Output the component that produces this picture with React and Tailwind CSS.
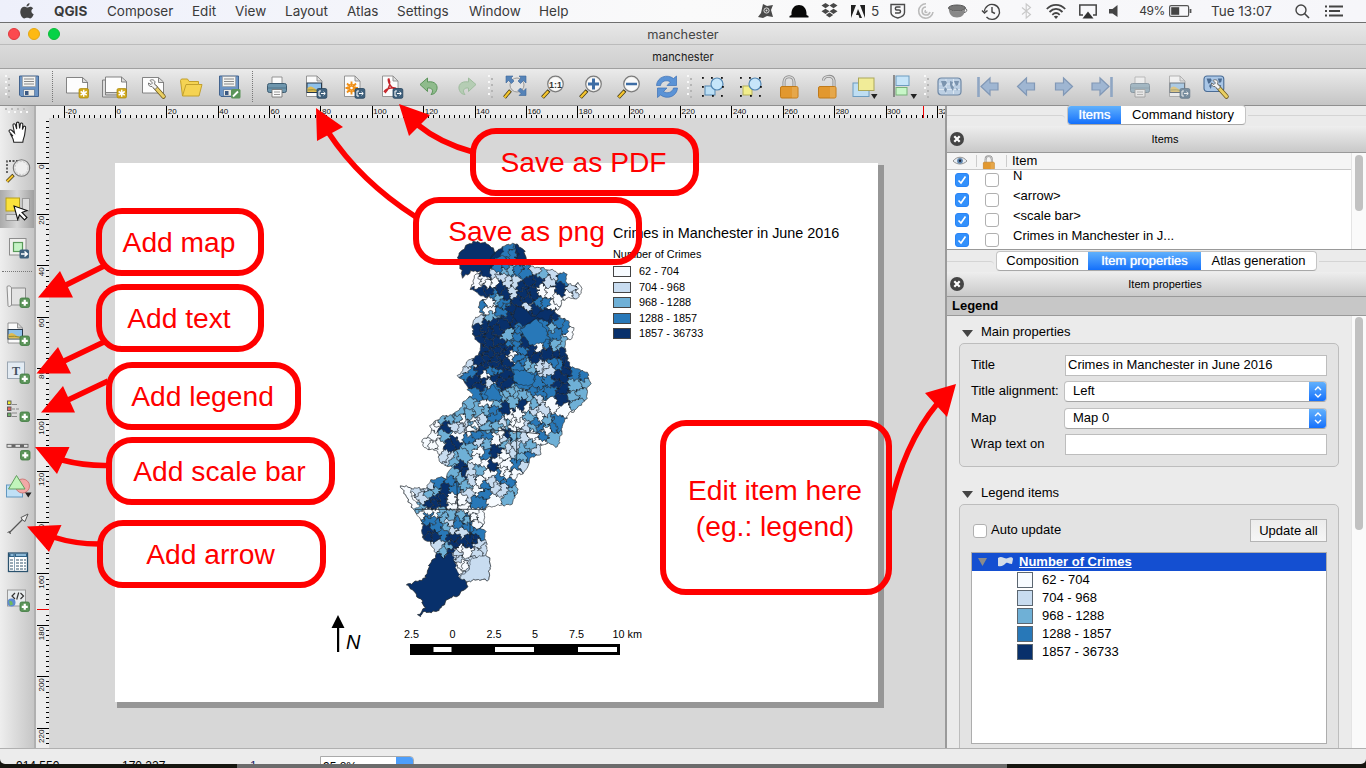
import React from 'react';

const HELV = "font-['Liberation_Sans',Arial,sans-serif]";
const SHADES = ['#f7fbff', '#c8dcf0', '#6fb0d6', '#2878b8', '#08306b'];

/* ---------- choropleth ---------- */

const OUTLINE = `203 75 235 42 265 34 300 45 318 66 340 50 368 40 400 55 408 80 400 103 440 112 480 120 512 130 528 130 530 160 552 168 565 158 577 182 560 205 530 205 515 215 505 240 492 240 512 265 535 270 540 285 552 292 545 325 528 330 525 355 530 375 540 412 562 415 592 430 600 460 590 485 592 505 575 520 552 545 537 548 532 565 520 575 512 618 503 650 470 640 452 650 450 675 425 680 412 710 405 728 385 735 376 750 383 790 360 825 335 825 290 832 280 845 285 870 272 895 285 900 285 925 290 940 290 975 302 995 295 1053 270 1048 232 1055 230 1070 205 1100 180 1102 155 1130 140 1145 100 1147 90 1160 85 1153 105 1135 95 1110 80 1095 50 1065 105 1045 120 1000 140 970 128 955 122 940 97 920 97 875 68 835 32 766 65 775 105 775 120 755 150 742 168 745 185 710 150 700 143 665 98 650 98 627 112 625 120 610 125 600 120 588 140 570 150 560 185 555 205 540 230 505 250 498 235 480 225 455 205 440 215 420 235 390 262 378 275 350 250 320 247 285 255 262 277 255 265 230 275 210 295 205 265 190 242 178 255 140 272 122 245 125 218 142 210 110`;

const SEEDS = [
  `260 155 295 160 285 150 310 160 455 185 480 190 500 210 490 225 570 180 540 195 295 235 298 220 540 305 370 375 360 385 450 347 285 435 290 525 525 540 480 525 450 562 380 560 370 572 360 560 255 575 130 590 145 580 220 570 415 527
   130 620 130 645 150 650 110 640 205 620 240 600 270 665 265 690 285 700 330 615 320 630 340 675 350 700 330 690 340 730 350 735 375 735 430 615 450 630 405 590 390 585 270 760 265 780 300 730 310 810 55 795 70 810 185 810 190 830 215 810 220 835 95 850 110 845 140 850 255 855 270 860 260 880 250 850 210 955 225 965 215 1005 225 1010 205 1020 370 600 465 600`,
  `310 130 350 150 380 157 335 140 370 190 435 120 490 135 480 152 545 175 560 192 410 230 265 272 465 410 480 420 450 405 295 462 235 400 230 418 210 575 230 585 440 505 460 540 430 545 270 570 345 580 405 590 270 630 260 573 350 650 370 660 440 660 400 705 375 650 170 675 180 685 240 725 240 750 310 750 320 775 340 780 240 790 75 785 100 805 115 770 190 900 215 910 180 880 145 945 265 940 270 965 280 960 205 975 212 982 250 1000 270 1020 230 1030 250 1040 185 978 400 620 340 620 190 585 215 595`,
  `365 115 340 125 460 130 325 205 305 260 350 320 412 408 425 412 485 295 500 340 515 345 560 465 585 460 550 500 575 490 560 520 380 490 360 485 395 495 340 500 350 495 240 530 265 540 290 530 210 540 240 550 420 500 430 520 370 510 180 565 155 565 420 560 470 580 320 520 320 590 350 580 200 570 285 640 240 650 220 680 190 690 165 615 290 595 420 645 490 625 395 680 190 725 210 740 230 760 270 720 360 800 370 780 130 785 120 790 160 860 185 855 215 855 230 870 150 850 170 890 175 950 165 960 90 832 240 585 430 590 345 645 400 655 375 615`,
  `345 70 330 90 370 80 410 130 515 145 325 112 350 100 380 120 310 192 345 230 335 245 340 215 275 230 450 215 462 220 430 300 400 295 460 290 445 320 420 325 380 330 360 340 400 360 385 380 400 400 385 410 395 440 420 440 440 460 480 455 450 490 430 490 400 462 480 485 310 480 320 500 290 490 260 485 380 345 505 280 525 290 495 315 510 400 490 392 560 430 580 440 240 430 320 425 390 280 440 580 500 580 320 560 310 540 460 335 300 425 260 620 240 630 290 615 285 670 455 590 490 585 455 620 420 680 380 705 330 740 360 760 280 790 265 815 280 770 145 760 180 760 190 770 120 870 135 890 160 910 110 855 230 890 225 865 205 880 270 910`,
  `250 80 285 120 310 70 390 80 300 187 330 170 270 190 395 170 420 150 445 150 400 190 435 190 380 215 410 210 350 195 360 235 395 245 440 240 470 260 425 265 490 255 380 270 400 262 265 300 285 290 310 275 300 310 320 300 340 280 350 265 265 330 300 340 325 335 280 360 300 370 320 360 340 350 290 390 315 385 335 375 350 362 270 390 350 395 340 410 310 400 345 430 350 460 330 450 320 440 425 360 440 380 470 372 500 378 520 370 515 390 525 420 510 440 500 460 515 480 520 500 405 340 250 450 265 470 285 450 275 420 510 175 345 535 400 520 165 592 535 400 190 635 180 645 350 612 318 660 305 710 210 710 220 725 165 775 140 805 155 810 120 825 135 820 110 900 120 915 135 920 190 925 240 930 220 935 260 930 190 940 180 965 150 1000 170 1000 130 1050 180 1050 140 1110 80 1060 200 1070`,
];

const toPairs = (s) => {
  const n = s.trim().split(/\s+/).map(Number);
  const out = [];
  for (let i = 0; i < n.length; i += 2) out.push([n[i], n[i + 1]]);
  return out;
};

const warp = ([x, y], k) => [
  x + k * (2.6 * Math.sin(y * 0.23 + x * 0.11) + 2.4 * Math.sin(y * 0.61 - x * 0.37)),
  y + k * (2.6 * Math.sin(x * 0.21 - y * 0.13) + 2.4 * Math.sin(x * 0.58 + y * 0.41)),
];

function roughPath(poly, step = 5, k = 0.8) {
  const pts = [];
  poly.forEach((a, i) => {
    const b = poly[(i + 1) % poly.length];
    const n = Math.max(1, Math.round(Math.hypot(b[0] - a[0], b[1] - a[1]) / step));
    for (let j = 0; j < n; j++) pts.push(warp([a[0] + ((b[0] - a[0]) * j) / n, a[1] + ((b[1] - a[1]) * j) / n], k));
  });
  return 'M' + pts.map((p) => p[0].toFixed(1) + ' ' + p[1].toFixed(1)).join('L') + 'Z';
}

function cellOf(site, sites) {
  let poly = [[0, 0], [660, 0], [660, 1200], [0, 1200]];
  for (const o of sites) {
    if (o === site) continue;
    const mx = (o.x + site.x) / 2, my = (o.y + site.y) / 2;
    const dx = o.x - site.x, dy = o.y - site.y;
    const side = (p) => (p[0] - mx) * dx + (p[1] - my) * dy;
    const next = [];
    for (let i = 0; i < poly.length; i++) {
      const a = poly[i], b = poly[(i + 1) % poly.length];
      const sa = side(a), sb = side(b);
      if (sa <= 0) next.push(a);
      if ((sa < 0 && sb > 0) || (sa > 0 && sb < 0)) {
        const t = sa / (sa - sb);
        next.push([a[0] + (b[0] - a[0]) * t, a[1] + (b[1] - a[1]) * t]);
      }
    }
    poly = next;
    if (!poly.length) break;
  }
  return poly;
}

const SITES = SEEDS.flatMap((s, c) => toPairs(s).map(([x, y]) => ({ x, y, c })));
const CELLS = SITES.map((s) => ({ d: roughPath(cellOf(s, SITES), 3, 1.5), c: s.c }));
const BORDER = roughPath(toPairs(OUTLINE), 6);

const BIG = [
  [4, '203 75 235 42 265 34 300 45 316 66 300 80 300 110 302 145 280 140 272 122 245 125 218 142 210 110'],
  [4, '318 66 340 52 335 75 318 85 304 110 300 85'],
  [4, '372 42 400 55 408 80 400 104 380 98 385 70'],
  [4, '140 970 160 985 185 965 200 1020 210 1045 232 1055 230 1070 205 1100 180 1102 155 1130 140 1145 100 1147 90 1160 85 1153 105 1135 95 1110 80 1095 50 1065 105 1045 120 1000'],
  [3, '390 300 440 265 465 292 478 325 450 340 420 345'],
  [1, '245 985 290 975 302 995 295 1053 270 1048 232 1055 210 1045 235 1020'],
  [0, '32 766 65 775 62 800 90 832 68 835'],
  [3, '370 420 410 422 435 435 430 462 400 468 372 455'],
  [3, '285 490 305 462 330 490 336 510 300 512'],
  [4, '378 225 400 235 430 262 460 240 500 240 470 272 440 262 400 290 370 262'],
];

function Choropleth() {
  return (
    <svg width="220" height="400" viewBox="0 0 660 1200" className="block">
      <clipPath id="city"><path d={BORDER} /></clipPath>
      <g clipPath="url(#city)" stroke="#1c242c" strokeWidth="1.5">
        {CELLS.map((c, i) => <path key={i} d={c.d} fill={SHADES[c.c]} />)}
        {BIG.map(([c, p], i) => <path key={i} d={roughPath(toPairs(p), 6)} fill={SHADES[c]} />)}
        <path d="M75 838H285M200 745L203 830 190 880M240 850V925M380 590V700M230 605L300 600 400 606 450 612" fill="none" strokeWidth="2.4" />
      </g>
      <path d={BORDER} fill="none" stroke="#3a4046" strokeWidth="2.2" />
    </svg>
  );
}

/* ---------- icons ---------- */

const Svg = ({ children, w = 24, h = 24, vb, className = '' }) => (
  <svg width={w} height={h} viewBox={vb || `0 0 ${w} ${h}`} className={'block shrink-0 overflow-visible ' + className} fill="none">{children}</svg>
);
const Plus = ({ x = 14, y = 14 }) => (
  <g><rect x={x} y={y} width="9.5" height="9.5" rx="1.8" fill="#5b9459" stroke="#3f7a40" strokeWidth=".8" /><path d={`M${x + 4.75} ${y + 1.8}v6M${x + 1.75} ${y + 4.8}h6`} stroke="#fff" strokeWidth="2.2" /></g>
);
const Star = () => (
  <g><rect x="14" y="13.5" width="9.5" height="9.5" rx="1.5" fill="#d0a91c" stroke="#a98708" strokeWidth=".7" /><path d="M18.7 14.800v7M15.600 16.500l6.200 3.600M21.800 16.500l-6.200 3.600" stroke="#fff" strokeWidth="1.500" /></g>
);
const Export = () => (
  <g><rect x="14" y="13.500" width="9.800" height="9.800" rx="1.500" fill="#3f617d" stroke="#27445d" strokeWidth=".8" /><path d="M18 16h-2v5h2M18 18.500h4M20.500 16.800l1.800 1.700-1.800 1.700" stroke="#fff" /></g>
);
const Floppy = () => (
  <g><path d="M2.500 1h19v20.500h-17.500l-1.500-1.500z" fill="#6c94c4" stroke="#43648f" /><path d="M5.500 1.500h13v10h-13z" fill="#f4f4f2" stroke="#999" strokeWidth=".6" /><path d="M7 4h10M7 6.500h10M7 9h10" stroke="#888" strokeWidth="1.100" /><path d="M6.500 14.500h11v6.500h-11z" fill="#eceae4" stroke="#43648f" strokeWidth=".6" /><path d="M8 16h3.500v4H8z" fill="#3c5a84" /></g>
);
const Sheet = () => <path d="M1.500 2.500h16l5 4.500v11h-21zM17.500 2.500v5h5" fill="#fdfdfd" stroke="#777" strokeWidth=".9" />;
const Doc = () => <path d="M3.500 1h10.500l5 5v15.500h-15.500zM14 1v5h5" fill="#fbfbfb" stroke="#8b8b8b" strokeWidth=".9" />;
const Wrench = () => (
  <g><path d="M14 12l8.500 9.500" stroke="#6e5a20" strokeWidth="4.500" strokeLinecap="round" /><path d="M14 12l8.500 9.500" stroke="#e9cf63" strokeWidth="3" strokeLinecap="round" /><path d="M9 5.500c2-1.600 4.500-.5 5 1.500l-.5 2 3 3-2.500 2.500-3-3c-2 .5-4-1-3.500-3.500l2.500 1.500 1.500-1.500z" fill="#f3f3f3" stroke="#555" strokeWidth=".8" /></g>
);
const Printer = () => (
  <g><path d="M7 2h10v7H7z" fill="#fbfbfb" stroke="#8b8b8b" strokeWidth=".9" /><rect x="2.500" y="8.500" width="19" height="9" rx="2" fill="#6e96ad" stroke="#3d5b70" /><path d="M3 13h18" stroke="#4e7288" /><path d="M7 14.500h10V22H7z" fill="#fbfbfb" stroke="#777" strokeWidth=".9" /><path d="M9 17h6M9 19.500h6" stroke="#999" /></g>
);
const Landscape = ({ y = 8 }) => (
  <g><rect x="4" y={y} width="14.500" height="9.500" fill="#8fc1ea" stroke="#27384a" /><path d={`M4.500 ${y + 5}q3-3 6.500 0t7 2V${y + 9}h-13.500z`} fill="#e0bb52" /><path d={`M4.500 ${y + 7}q5-1 13.500 1`} stroke="#8f8d3a" /></g>
);
const Lens = ({ children }) => (
  <g><path d="M1.500 22.500l6.500-7" stroke="#3d3410" strokeWidth="3.800" /><path d="M1.800 22.200l5.500-6" stroke="#f5c52e" strokeWidth="2.400" /><circle cx="14.500" cy="9" r="7.800" fill="#eeeeec" stroke="#7c7c7c" strokeWidth="1.200" /><circle cx="14.500" cy="9" r="6.300" fill="#fafafa" />{children}</g>
);
const Padlock = ({ open }) => (
  <g><path d={open ? 'M8.500 5.500c0-5 9.500-6 10.500 0v7.500' : 'M7 13V7c0-7 10-7 10 0v6'} stroke="#8a8a8a" strokeWidth="3" /><path d={open ? 'M8.500 5.500c0-5 9.500-6 10.500 0v7.500' : 'M7 13V7c0-7 10-7 10 0v6'} stroke="#d8d8d8" strokeWidth="1.400" /><rect x="3.500" y="11.500" width="17.500" height="11.500" rx="1.500" fill="#e2982f" stroke="#c07a1a" /><path d="M15 12h5.500v10.500H15z" fill="#eab15d" opacity=".6" /></g>
);
const Handles = () => (
  <g fill="#111">{[[1, 2], [10, 2], [20, 2], [1, 20], [11, 20], [20, 20], [1, 11], [21, 11]].map(([x, y], i) => <rect key={i} x={x} y={y} width="1.800" height="1.800" />)}</g>
);
const World = () => (
  <g><rect x="0" y="3" width="23" height="17" rx="3.500" fill="#bccfe3" stroke="#7089a6" strokeWidth="1.200" /><path d="M8 4v15M15.500 4v15M1 9h21M1 14.500h21" stroke="#dce7f2" /><path d="M3 6h5l1 2-2 3-2 1zM7 12l2 2-1 4-2-3zM12 6l3 1-1 3 2 2-1 4-2-3-1-3zM16 6h5l-1 4-2 1zM18 13l2 1-1 2z" fill="#7b94af" /></g>
);
const ARROW = 'M2 12l9-8.500V8.500h8v7h-8v5z';
const Nav = ({ flip, bar }) => (
  <g transform={flip ? 'matrix(-1 0 0 1 24 0)' : undefined}><path d={ARROW} transform={bar ? 'translate(3 -.5)' : 'translate(1.500 -.5)'} fill="#9fb6d2" stroke="#8198b6" strokeWidth="1.200" />{bar && <path d="M2.500 2v20" stroke="#8fa6c3" strokeWidth="2.600" />}</g>
);
const Tri = ({ x = 18, y = 19 }) => <path d={`M${x} ${y}h6.500l-3.200 5z`} fill="#222" />;

const T = {
  save: <Floppy />,
  fresh: <><Sheet /><Star /></>,
  dup: <><path d="M-.5 5h3v15h15v2H-.5z" fill="#ddd" stroke="#777" strokeWidth=".9" /><g transform="translate(1 -.5)"><Sheet /></g><Star /></>,
  manager: <><Sheet /><Wrench /></>,
  folder: <path d="M1.500 5.500l1-1.500h6l1.500 2.500h9.500v3h3.500l-3 11.500H3.500zM3.500 21l3.500-11.500h12.500" fill="#f5d353" stroke="#c2a02d" />,
  saveAs: <><Floppy /><rect x="14" y="14" width="9.500" height="9.500" rx="1.500" fill="#5b9459" /><path d="M16 21.500l5-5" stroke="#fff" strokeWidth="1.800" /></>,
  print: <Printer />,
  image: <><Doc /><Landscape /><Export /></>,
  svg: <><Doc /><g stroke="#f09018" strokeWidth="1.800"><path d="M10.500 6.500v13M4.500 13h12.500M6 8.500l9 9M15 8.500l-9 9" /><circle cx="10.500" cy="13" r="4" strokeWidth="1" /></g><circle cx="10.500" cy="13" r="1.300" fill="#fff" /><Export /></>,
  pdf: <><Doc /><path d="M6 18c4-4 6-10 4-14-2-1 0 8 6 10 2 0 1-2-4-1-3 .5-6 2-7 4" stroke="#c4262b" strokeWidth="1.400" /><Export /></>,
  undo: <path d="M3 9.500L10.500 3v4c8-1.500 11 4 9 8.500-1 2.800-3.500 4-5.500 4 3-3.500 1.500-7-3.500-6.500v3.500z" fill="#8fbb8c" stroke="#5c955b" strokeLinejoin="round" />,
  redo: <path transform="matrix(-1 0 0 1 24 0)" d="M3 9.500L10.500 3v4c8-1.500 11 4 9 8.500-1 2.800-3.500 4-5.500 4 3-3.500 1.500-7-3.500-6.500v3.500z" fill="#b5cdb4" stroke="#9fbd9e" strokeLinejoin="round" />,
  full: <><path d="M1.500 22.500l6-7" stroke="#3d3410" strokeWidth="3.600" /><path d="M1.500 22.500l5.500-6.500" stroke="#f5c52e" strokeWidth="2.200" /><circle cx="14" cy="10" r="7" fill="#e2e2e2" stroke="#999" /><g fill="#5583b8" stroke="#3d6597" strokeWidth=".6"><path d="M3 1h7L8 3l3 3-2.500 2.500-3-3L3 8zM23 1h-7l2 2-3 3 2.500 2.500 3-3L23 8zM23 20.500h-7l2-2-3-3 2.500-2.500 3 3L23 13.500z" /></g></>,
  one: <Lens><text x="14.500" y="12.500" textAnchor="middle" fontSize="9" fontWeight="bold" fontFamily="Liberation Sans" fill="#333">1:1</text></Lens>,
  zin: <Lens><path d="M14.500 3.500v11M9 9h11" stroke="#3d6da5" strokeWidth="3" /></Lens>,
  zout: <Lens><path d="M9 9h11" stroke="#3d6da5" strokeWidth="2.600" /></Lens>,
  refresh: <g fill="#5b93d6" stroke="#3c70b4" strokeWidth=".7"><path d="M1.500 10.500C2 2 12-1.500 18.500 3.500L21.500 1v9.500h-9.500l3.500-3.500C12 4.500 6 6 5.500 10.500z" /><path d="M22.500 13C22 21.500 12 25 5.500 20L2.500 22.500V13h9.500l-3.500 3.500c3.500 2.500 9 1 10-3.500z" /></g>,
  group: <><rect x="4" y="11" width="10" height="9" fill="#bcdff5" stroke="#5387b3" /><circle cx="16" cy="9" r="6" fill="#c6e6fa" stroke="#5387b3" strokeWidth="1.200" /><Handles /></>,
  ungroup: <><rect x="4" y="11" width="9" height="9" fill="#f2ee8c" stroke="#b5b15c" /><circle cx="16" cy="9" r="6" fill="#c6e6fa" stroke="#5387b3" strokeWidth="1.200" /><Handles /></>,
  lock: <Padlock />,
  unlock: <Padlock open />,
  raise: <><rect x="0" y="8" width="16" height="13.500" fill="#bfdef2" stroke="#6d9cc0" /><rect x="5.500" y="3" width="15.500" height="12.500" fill="#f1ec98" stroke="#aba75a" /><Tri /></>,
  align: <g transform="translate(1.500 -1)"><path d="M1.500 1v22" stroke="#555" strokeWidth="1.200" /><rect x="3.500" y="2" width="13" height="9.500" fill="#c6e4f8" stroke="#6d9cc0" /><rect x="3.500" y="13.500" width="11" height="7.500" fill="#c8f6c8" stroke="#76b178" /><Tri y={20} /></g>,
  atlas: <World />,
  first: <Nav bar />,
  prev: <Nav />,
  next: <Nav flip />,
  last: <Nav flip bar />,
  printOff: <g opacity=".5"><Printer /></g>,
  imageOff: <g opacity=".6"><Doc /><Landscape /><Export /></g>,
  atlasSet: <><g transform="translate(0 1) scale(.86)"><rect x="0" y="0" width="23" height="18" rx="3.500" fill="#a9c6e6" stroke="#4a6c95" strokeWidth="1.300" /><path d="M3 3h5l1 2-2 3-2 1zM7 9l2 2-1 4-2-3zM16 3h5l-1 4-2 1zM18 10l2 1-1 2z" fill="#4c6c92" /></g><Wrench /></>,
  hand: <path transform="translate(1 .5)" d="M6 14.500l-3.500-4c-1.500-2 1-3 2.500-1.500l2.500 2.500-1.500-7.500c-.3-2 2-2.300 2.500-.5l1.200 4-.2-5.500c0-1.800 2.500-1.800 2.600 0l.5 5 .8-4.500c.4-1.700 2.600-1.200 2.400.5l-.4 5 1-2.500c.9-1.500 2.500-.8 2.200.8l-1 7c-.5 3-1.500 4-1.800 7.500h-9c-.3-3-1-4.500-2.800-7.300z" fill="#fff" stroke="#222" strokeWidth="1.100" />,
  zoom: <><path d="M1 14V2h11" stroke="#222" strokeDasharray="2 1.500" strokeWidth="1.300" /><path d="M1 22.500l6.500-6.500" stroke="#3d3410" strokeWidth="3.400" /><path d="M1 22.500l6-6" stroke="#f5c52e" strokeWidth="2" /><circle cx="15.500" cy="9" r="8.200" fill="#e6e6e6" stroke="#777" strokeWidth="1.100" /><circle cx="15.500" cy="9" r="6.500" fill="#eee" stroke="#c8c8c8" strokeDasharray="2 1.500" /></>,
  select: <><rect x="16.500" y="1.500" width="7" height="12.500" fill="#dcdcdc" stroke="#999" /><rect x="0" y="17.500" width="13" height="6" fill="#dcdcdc" stroke="#999" /><rect x="0" y="1" width="13.500" height="13" fill="#fbe23c" stroke="#b79f18" /><path d="M8 9l13 4.500-5 2 5 5-2.500 2.500-5-5.200-1.800 4.700z" fill="#fff" stroke="#111" strokeWidth="1.100" /></>,
  move: <><rect x="3.500" y="3.500" width="16.500" height="16.500" fill="#f0f0ee" stroke="#8d8d8d" /><rect x="7.500" y="7.500" width="9" height="9" fill="#c5f3c5" stroke="#5a9a5a" strokeWidth="1.200" /><rect x="13.500" y="14.500" width="9.500" height="9" rx="1.500" fill="#3f617d" /><path d="M15 19h5.500M18.500 16.500l2.800 2.500-2.800 2.500" stroke="#fff" strokeWidth="1.500" /></>,
  addMap: <><path d="M5 4h14.500v17H5z" fill="#e3e3e3" stroke="#8d8d8d" /><path d="M1 2.500c2.500-1.500 4 0 4.500 1.500v17c-1 2-4 2-3.500 0z" fill="#f1f1f1" stroke="#8d8d8d" /><Plus /></>,
  addImage: <><path d="M2 1h9.500l5 5v15h-14.500zM11.500 1v5h5" fill="#fbfbfb" stroke="#8b8b8b" strokeWidth=".9" /><g transform="translate(-2 0)"><Landscape y={7.500} /></g><Plus /></>,
  addLabel: <><rect x="1.500" y="2" width="17" height="16.500" fill="#e3ebf3" stroke="#9aa6b2" /><text x="10" y="14.500" textAnchor="middle" fontSize="12" fontFamily="Liberation Serif" fontWeight="bold" fill="#44525f">T</text><Plus /></>,
  addLegend: <><g stroke="#555" strokeWidth=".9"><rect x="1.500" y="3" width="3.500" height="3.500" fill="#ecea2e" /><rect x="1.500" y="9" width="3.500" height="3.500" fill="#e4605c" /><rect x="1.500" y="15" width="3.500" height="3.500" fill="#6cb068" /></g><path d="M6 6.500h5M6 11h3M10 11h3M6 15h5M6 18.500h5" stroke="#888" strokeWidth="1.200" /><Plus /></>,
  addScale: <><rect x="1" y="8.300" width="21" height="3" fill="#e2e2e2" stroke="#555" strokeWidth=".8" /><path d="M5.500 9.800h4M14 9.800h4" stroke="#666" strokeWidth="2.500" /><Plus x={14.500} y={14.500} /></>,
  addShape: <><rect x=".5" y="11" width="16" height="12" fill="#c0e0f6" stroke="#6298c0" /><circle cx="16.500" cy="12" r="7" fill="#f2a9a7" stroke="#cf7b79" /><path d="M10.500 1.500l8.500 13.500H2.500z" fill="#c1f5bb" stroke="#629c5e" /><Tri x={19} y={18.500} /></>,
  addArrow: <><path d="M3 21L17 7" stroke="#555" strokeWidth="1.200" /><path d="M15 5.500l7-3.500-3 7.500-2.500-1.500z" fill="#eee" stroke="#555" /><path d="M1.500 20.500l2-1 1 2.500" stroke="#555" /></>,
  addTable: <><rect x="2.500" y="3" width="19" height="18.500" fill="#fff" stroke="#2b526e" strokeWidth="1.300" /><rect x="3" y="3.500" width="18" height="3.500" fill="#2f6389" /><path d="M4.500 5h3M10 5h10" stroke="#a9d3ef" strokeWidth="1.600" /><path d="M8.500 4v17" stroke="#6b8ba3" strokeWidth=".8" /><path d="M4 10h4M10 10h10M4 13h4M10 13h10M4 16h4M10 16h10M4 19h4M10 19h10" stroke="#33546c" strokeDasharray="3 1" /></>,
  addHtml: <><rect x="1.500" y="2" width="18" height="16" fill="#e8ecee" stroke="#9a9a9a" /><circle cx="5.500" cy="14.500" r="4" fill="#5f8bd0" /><path d="M3 12.500l3 1 1 3-3 1z" fill="#6fba5e" /><path d="M9 5L6 8l3 3M14.500 5l3 3-3 3M12.700 4.500l-2 7" stroke="#333" strokeWidth="1.200" /><Plus /></>,
};

const Tool = ({ k }) => <div className="flex w-[38px] shrink-0 items-center justify-center"><Svg>{T[k]}</Svg></div>;
const Tools = ({ items }) => <div className="flex">{items.map((k) => <Tool key={k} k={k} />)}</div>;
const Grip = ({ w = 'w-[9px]' }) => (
  <div className={'flex shrink-0 items-center justify-center ' + w}>
    <Svg w={6} h={24}>{[0, 1, 2, 3, 4, 5, 6, 7].map((i) => <rect key={i} x={i % 2 ? 3 : 0} y={i * 3} width="2" height="2" fill={i % 2 ? '#b5b5b5' : '#f8f8f8'} />)}</Svg>
  </div>
);
const Dots = () => <div className="flex w-[10px] shrink-0 pb-[3px] pl-[4px] pt-[2px]"><div className="border-l border-dotted border-[#777]" /></div>;

/* ---------- menu bar ---------- */

const MENUS = [
  ['QGIS', 'w-[53px] font-bold'], ['Composer', 'w-[85px]'], ['Edit', 'w-[43px]'], ['View', 'w-[50px]'], ['Layout', 'w-[62px]'],
  ['Atlas', 'w-[50px]'], ['Settings', 'w-[72px]'], ['Window', 'w-[70px]'], ['Help', 'w-[40px]'],
];

function MenuBar() {
  return (
    <div className="flex h-[23px] shrink-0 items-center border-b border-[#6f6f6f] bg-gradient-to-r from-[#eef0fb] via-[#fafafa] to-[#f6f6fa] font-['Inter','Open_Sans',sans-serif] text-[13.5px] tracking-[0px] text-[#3a3a3a]">
      <Svg w={14} h={16} className="ml-[20px] mr-[20px]"><path d="M9.500 0c.2 2-1.300 3.500-3 3.500C6.300 2 7.800.3 9.500 0zM7 4.500c1 0 1.800-.8 3.200-.8 1.200 0 2.300.6 3 1.600-2.700 1.600-2.200 5 .5 6-.6 1.700-2 4.200-3.500 4.200-1.200 0-1.500-.7-3-.7s-1.900.7-3 .7C2.300 15.500 0 11.500.3 8.500.5 5.700 2.300 3.800 4.200 3.800c1.200 0 2 .7 2.800.7z" fill="#444" /></Svg>
      <div className="flex">{MENUS.map(([m, c]) => <span key={m} className={'whitespace-nowrap leading-[22px] ' + c}>{m}</span>)}</div>
      <div className="ml-auto flex items-center">
        <Svg w={16} h={16} className="mr-[15px]"><path d="M5 1l4 2 6-1-2 5 2 7-6-1-4 2-5-1 3-4z" fill="#4a4a4a" /><circle cx="8.500" cy="7.500" r="2.600" stroke="#ddd" /><circle cx="8.500" cy="7.500" r="1" fill="#ddd" /></Svg>
        <Svg w={20} h={14} className="mr-[12px]"><path d="M2.500 11C2 4 6 1 10 1s8 3 7.500 10l2 1v1.500H.5V12z" fill="#080808" /></Svg>
        <Svg w={17} h={16} className="mr-[13px]"><path d="M4.500 0l4 2.500-4 2.700L.5 2.500zM12.500 0l4 2.500-4 2.700-4-2.700zM4.500 5.700l4 2.600-4 2.600-4-2.600zM12.500 5.700l4 2.600-4 2.600-4-2.600zM4.800 12l3.700-2.500 3.700 2.500-3.700 2.500z" fill="#484848" /></Svg>
        <Svg w={14} h={13} className="mr-[6px]"><path d="M0 0h5L0 13zM14 0H9l5 13zM7 4l4 9H8.500L7.500 10H5z" fill="#222" /></Svg>
        <span className="mr-[11px]">5</span>
        <Svg w={16} h={16} className="mr-[12px]"><path d="M1 1.500h13.500v8c0 3-3 4.500-6.700 5.500C4 14 1 12.500 1 9.500z" stroke="#4a4a4a" strokeWidth="1.400" /><path d="M10.500 4H6.500c-1.500 0-1.500 3 0 3h2.500c2 0 2 3 0 3H5" stroke="#4a4a4a" strokeWidth="1.500" /></Svg>
        <Svg w={16} h={16} className="mr-[14px]"><path d="M8 .8A7.200 7.200 0 1 0 15 9M8 4a4 4 0 1 0 4 5M8 7.500a1 1 0 1 0 1 1.200" stroke="#bbb" strokeWidth="1.600" /></Svg>
        <Svg w={20} h={14} className="mr-[14px]"><ellipse cx="9" cy="4" rx="8.500" ry="3" fill="#777" stroke="#555" /><path d="M.8 5C1 10 4 13.500 9 13.500S17 10 17.200 5c-3 3-13 3-16.400 0z" fill="#888" /><path d="M17 4.500c3 .5 2 4-1 4" stroke="#666" /></Svg>
        <Svg w={19} h={17} className="mr-[20px]"><path d="M2.500 8.500a7.500 7.500 0 1 1 2 5.500M0 7.500l2.500 2.500L5.500 7.500M10 4v5l3 1.500" stroke="#444" strokeWidth="1.400" /></Svg>
        <Svg w={11} h={16} className="mr-[14px]"><path d="M1 4.500l8.500 7L5.200 15V1l4.300 3.500-8.500 7" stroke="#c8c8c8" strokeWidth="1.100" /></Svg>
        <Svg w={20} h={15} className="mr-[13px]"><path d="M.8 5C6-.5 14-.5 19.200 5M3.500 8c4-4 9-4 13 0M6.300 10.800c2.500-2.300 5-2.300 7.400 0" stroke="#444" strokeWidth="1.800" /><path d="M7.800 12.500q2.200-1.600 4.400 0L10 15z" fill="#444" /></Svg>
        <Svg w={18} h={15} className="mr-[12px]"><path d="M4 11H.8V1h16.400v10H14" stroke="#444" strokeWidth="1.500" /><path d="M9 7.500l5.500 7h-11z" fill="#333" /></Svg>
        <Svg w={9} h={12} className="mr-[21px]"><path d="M0 4h3.500L8.500 0v12L3.500 8.500H0z" fill="#444" /></Svg>
        <span className="mr-[4px] text-[12px] tracking-[-0.4px]">49%</span>
        <Svg w={23} h={12} className="mr-[19px]"><rect x=".6" y=".6" width="19" height="10.800" rx="1.500" stroke="#555" strokeWidth="1.200" /><rect x="2.200" y="2.200" width="8" height="7.600" fill="#444" /><path d="M21.500 4v4" stroke="#555" strokeWidth="1.800" /></Svg>
        <span className="mr-[22px] w-[62px] whitespace-nowrap">Tue 13:07</span>
        <Svg w={15} h={15} className="mr-[15px]"><circle cx="6" cy="6" r="5" stroke="#444" strokeWidth="1.400" /><path d="M9.500 9.500l4.500 4.500" stroke="#444" strokeWidth="1.600" /></Svg>
        <Svg w={18} h={12} className="mr-[23px]"><path d="M4 1.500h14M4 6h11M4 10.500h14" stroke="#444" strokeWidth="1.800" /><path d="M0 1.500h2M0 6h2M0 10.500h2" stroke="#444" strokeWidth="1.800" /></Svg>
      </div>
    </div>
  );
}

/* ---------- rulers ---------- */

const STEP = 51.37;

function TopRuler() {
  const ticks = [];
  for (let i = -12; i <= 161; i++) ticks.push(i);
  return (
    <Svg w={909} h={12}>
      <rect width="909" height="12" fill="#ececec" />
      {ticks.map((i) => {
        const x = Math.round(79 + (i * STEP) / 10);
        return <rect key={i} x={x} y={i % 10 ? 9 : 0} width="1" height={i % 10 ? 3 : 12} fill="#000" />;
      })}
      {Array.from({ length: 18 }, (_, k) => k - 1).map((k) => (
        <text key={k} x={k === 17 ? 902 : 80.5 + k * STEP} y="7.500" fontSize={k === 17 ? 6 : 8} fontFamily="Liberation Sans" fill="#111">{k === 17 ? '32' : k * 20}</text>
      ))}
      <rect x="887" width="1" height="12" fill="#e00" />
    </Svg>
  );
}

function SideRuler() {
  const ticks = [];
  for (let i = -8; i <= 113; i++) ticks.push(i);
  return (
    <Svg w={13} h={630} className="shrink-0">
      <rect width="13" height="630" fill="#ececec" />
      {ticks.map((i) => {
        const y = Math.round(44.500 + (i * STEP) / 10);
        return <rect key={i} x={i % 10 ? 10 : 1} y={y} width={i % 10 ? 3 : 12} height="1" fill="#000" />;
      })}
      {Array.from({ length: 12 }, (_, k) => k).map((k) => (
        <text key={k} transform={`translate(8 ${46.500 + k * STEP}) rotate(-90)`} textAnchor="end" fontSize="8" fontFamily="Liberation Sans" fill="#111">{k * 20}</text>
      ))}
      <rect x="1" y="491" width="12" height="1" fill="#e00" />
    </Svg>
  );
}

/* ---------- composition ---------- */

const CLASSES = ['62 - 704', '704 - 968', '968 - 1288', '1288 - 1857', '1857 - 36733'];
const SWATCH = ['bg-[#f7fbff]', 'bg-[#c8dcf0]', 'bg-[#6fb0d6]', 'bg-[#2878b8]', 'bg-[#08306b]'];

function Composition() {
  return (
    <div className="relative min-w-0 flex-1 overflow-hidden bg-[#d7d7d7]">
      <div className="absolute left-[68px] top-[47px] h-[543px] w-[767px] bg-[#969696]" />
      <div className="absolute left-[66px] top-[45px] h-[539px] w-[763px] bg-white" />
      <div className="absolute left-[341px] top-[112px]"><Choropleth /></div>
      <div className="absolute left-[564px] top-[106px] text-black">
        <div className="whitespace-nowrap text-[14.4px] leading-[18px]">Crimes in Manchester in June 2016</div>
        <div className="mt-[5px] whitespace-nowrap text-[10.900px] leading-[14px]">Number of Crimes</div>
        <div className="mt-[3px] flex flex-col">
          {CLASSES.map((c, i) => (
            <div key={c} className="flex h-[15.500px] items-center">
              <div className={'h-[11px] w-[18px] border border-[#444] ' + SWATCH[i]} />
              <span className="ml-[8px] text-[10.900px] leading-[13px]">{c}</span>
            </div>
          ))}
        </div>
      </div>
      <div className="absolute left-[282px] top-[496px] flex">
        <Svg w={14} h={40}><path d="M7 1l6.500 13H.5zM6 12h2.200v26H6z" fill="#000" /></Svg>
        <span className="ml-px mt-[16px] text-[20px] italic leading-[24px]">N</span>
      </div>
      <div className="absolute left-[355px] top-[508px]">
        <Svg w={245} h={32}>
          {[['2.5', 7.500], ['0', 48.500], ['2.5', 90], ['5', 131], ['7.5', 172.500]].map(([t, x], i) => (
            <text key={i} x={x} y="12" textAnchor="middle" fontSize="10.800" fontFamily="Liberation Sans" fill="#000">{t}</text>
          ))}
          <text x="208.500" y="12" fontSize="10.800" fontFamily="Liberation Sans" fill="#000">10 km</text>
          <rect x="6" y="18" width="210" height="11" fill="#000" />
          <path d="M29.500 21h18v5h-18zM91 21h39v5H91zM174 21h39v5h-39z" fill="#fff" />
        </Svg>
      </div>
    </div>
  );
}

/* ---------- right docks ---------- */

const SEG_ON = 'bg-gradient-to-b from-[#5fb0fc] to-[#126ffb] text-white font-normal [text-shadow:0_0_1px_#fff]';

function Segments({ items, active, pad }) {
  return (
    <div className={'flex h-[20px] shrink-0 ' + pad}>
      <div className="mt-[10px] h-[10px] flex-1 rounded-tr-sm border-t border-[#d4d4d4]" />
      <div className="mx-[2px] flex h-[20px] overflow-hidden rounded-[4px] border border-[#c4c4c4] border-b-[#a8a8a8] bg-white text-[13px]">
        {items.map(([t, w]) => <div key={t} className={'flex items-center justify-center whitespace-nowrap leading-[18px] ' + w + ' ' + (t === active ? SEG_ON : '')}>{t}</div>)}
      </div>
      <div className="mt-[10px] h-[10px] flex-1 border-t border-[#d4d4d4]" />
    </div>
  );
}

const DockTitle = ({ children, h }) => (
  <div className={'flex shrink-0 items-center border-b border-[#999] bg-gradient-to-b from-[#eeeeee] to-[#c9c9c9] pl-[3px] ' + h}>
    <Svg w={14} h={14}><circle cx="7" cy="7" r="7" fill="#444" /><path d="M4.300 4.300l5.400 5.400M9.700 4.300L4.300 9.700" stroke="#fff" strokeWidth="2.200" /></Svg>
    <div className="flex-1 text-center text-[11px]">{children}</div>
  </div>
);

const Check = ({ on }) => (
  <div className={'flex h-[14px] w-[14px] shrink-0 items-center justify-center rounded-[3px] border ' + (on ? 'border-[#2a84f5] bg-[#3391fc]' : 'border-[#b0b0b0] bg-white')}>
    {on && <Svg w={10} h={10}><path d="M1.500 5.500L4 8l4.500-6.500" stroke="#fff" strokeWidth="1.700" /></Svg>}
  </div>
);

const Select = ({ children }) => (
  <div className="-ml-px flex h-[21px] w-[263px] overflow-hidden rounded-[4px] border border-[#c0c0c0] border-b-[#a5a5a5] bg-white">
    <span className="flex-1 pl-[8px] leading-[17px]">{children}</span>
    <div className="flex w-[17px] items-center justify-center bg-gradient-to-b from-[#61b0fc] to-[#1570fb]"><Svg w={8} h={12}><path d="M1 4l3-3 3 3M1 8l3 3 3-3" stroke="#fff" strokeWidth="1.400" /></Svg></div>
  </div>
);
const Field = ({ children }) => <div className="h-[21px] w-[262px] border border-[#bdbdbd] bg-white pl-[2px] leading-[18px]">{children}</div>;
const Row = ({ label, children }) => <div className="flex h-[26.300px] items-start"><span className="w-[94px] shrink-0 whitespace-nowrap leading-[19px]">{label}</span>{children}</div>;
const Section = ({ children }) => (
  <div className="flex h-[16px] items-center gap-[8px] pl-[15px]"><Svg w={11} h={7} className="mt-[3px]"><path d="M0 0h11L5.500 7z" fill="#444" /></Svg><span className="leading-[16px]">{children}</span></div>
);

function Docks() {
  return (
    <div className="flex w-[421px] shrink-0 flex-col border-l-2 border-[#9a9a9a] bg-[#ebebeb] text-[13px] text-black">
      <div className="h-[20px] shrink-0"><Segments items={[['Items', 'w-[53px]'], ['Command history', 'w-[124px]']]} active="Items" pad="-mt-px" /></div>
      <DockTitle h="h-[27px]">Items</DockTitle>
      <div className="flex h-[97px] shrink-0 border-b border-[#999] bg-white">
        <div className="flex-1">
          <div className="flex h-[17px] items-center overflow-hidden border-b border-[#c8c8c8] bg-[#f5f5f5]">
            <Svg w={14} h={10} className="ml-[6px]"><path d="M0 5C4 0 10 0 14 5 10 9 4 9 0 5z" fill="#e8eef4" stroke="#888" strokeWidth=".9" /><circle cx="7" cy="4.800" r="2.900" fill="#5d84ac" /><circle cx="7" cy="4.800" r="1.200" fill="#223" /></Svg>
            <div className="ml-[9px] h-[12px] w-px bg-[#ccc]" />
            <Svg w={12} h={15} vb="3 0 19 24" className="ml-[6px] mt-[2px]"><Padlock /></Svg>
            <div className="ml-[11px] h-[12px] w-px bg-[#ccc]" />
            <span className="ml-[5px] leading-[16px]">Item</span>
          </div>
          {['N', '<arrow>', '<scale bar>', 'Crimes in Manchester in J...'].map((t) => (
            <div key={t} className="flex h-[20px] pl-[8px]">
              <div className="mt-[3px]"><Check on /></div>
              <div className="ml-[16px] mt-[3px]"><Check /></div>
              <span className="-mt-[3px] ml-[14px] whitespace-nowrap leading-[18px]">{t}</span>
            </div>
          ))}
        </div>
        <div className="w-[15px] border-l border-[#e4e4e4] bg-[#fafafa] pl-[3px] pt-[2px]"><div className="h-[56px] w-[8px] rounded-full bg-[#c1c1c1]" /></div>
      </div>
      <div className="h-[22px] shrink-0 pt-px"><Segments items={[['Composition', 'w-[91px]'], ['Item properties', 'w-[113px]'], ['Atlas generation', 'w-[115px]']]} active="Item properties" pad="" /></div>
      <DockTitle h="h-[25px]">Item properties</DockTitle>
      <div className="h-[19px] shrink-0 border-b border-[#999] bg-[#c7c7c7] pl-[5px] font-bold leading-[18px]">Legend</div>
      <div className="flex min-h-0 flex-1 overflow-hidden">
        <div className="flex-1 pt-[8px]">
          <Section>Main properties</Section>
          <div className="ml-[12px] mt-[3px] h-[124px] w-[380px] rounded-[5px] border border-[#bdbdbd] bg-[#e3e3e3] pl-[11px] pt-[11px]">
            <Row label="Title"><Field>Crimes in Manchester in June 2016</Field></Row>
            <Row label="Title alignment:"><Select>Left</Select></Row>
            <Row label="Map"><Select>Map 0</Select></Row>
            <Row label="Wrap text on"><Field /></Row>
          </div>
          <div className="h-[18px]" />
          <Section>Legend items</Section>
          <div className="ml-[12px] mt-[3px] h-[300px] w-[380px] rounded-[5px] border border-[#bdbdbd] bg-[#e3e3e3] px-[11px] pt-[14px]">
            <div className="flex items-start">
              <div className="ml-[2px] mt-[5px]"><Check /></div>
              <span className="ml-[4px] mt-[2px] leading-[18px]">Auto update</span>
              <div className="ml-auto h-[23px] w-[77px] border border-[#b5b5b5] bg-gradient-to-b from-[#ececec] to-[#f6f6f6] text-center leading-[21px]">Update all</div>
            </div>
            <div className="mt-[10px] h-[192px] w-[356px] border border-[#adadad] bg-white">
              <div className="flex h-[18px] items-center bg-[#144fd1] font-bold text-white">
                <Svg w={9} h={8} className="ml-[6px]"><path d="M0 0h9L4.500 8z" fill="#8b8b8b" /></Svg>
                <Svg w={17} h={12} className="ml-[10px]"><path d="M1 2c4-3 7 2 10 0 2-1 5-1 5 1l-1 5c-3 0-4-2-6-1-2 2-4 4-8 3z" fill="#d3dde8" /></Svg>
                <span className="ml-[5px] text-[13px] leading-[16px] underline">Number of Crimes</span>
              </div>
              {CLASSES.map((c, i) => (
                <div key={c} className="flex h-[18px] items-center pl-[45px]"><div className={'h-[16px] w-[16px] border border-[#5b6670] ' + SWATCH[i]} /><span className="ml-[9px] leading-[16px]">{c}</span></div>
              ))}
            </div>
          </div>
        </div>
        <div className="w-[15px] border-l border-[#e4e4e4] bg-[#fafafa] pl-[3px] pt-[1px]"><div className="h-[213px] w-[8px] rounded-full bg-[#c1c1c1]" /></div>
      </div>
    </div>
  );
}

/* ---------- annotations ---------- */

const NOTES = [
  ['left-[96px] top-[208px] h-[68px] w-[168px]', 'Add map'],
  ['left-[96px] top-[284px] h-[68px] w-[168px]', 'Add text'],
  ['left-[106px] top-[362px] h-[68px] w-[195px]', 'Add legend'],
  ['left-[106px] top-[437px] h-[68px] w-[229px]', 'Add scale bar'],
  ['left-[97px] top-[520px] h-[68px] w-[229px]', 'Add arrow'],
  ['left-[470px] top-[128px] h-[68px] w-[229px]', 'Save as PDF'],
  ['left-[413px] top-[197px] h-[68px] w-[229px]', 'Save as png'],
  ['left-[660px] top-[420px] h-[175px] w-[232px]', 'Edit item here (eg.: legend)'],
];

function Annotations() {
  return (
    <div className="pointer-events-none absolute inset-0">
      <Svg w={1366} h={768}>
        <g fill="#f00">
          <path d="M399 104L430 115 409 136zM316 108L343 127 317 141zM38 297.500L60 271 73 297.500zM36.500 373.500L58 347 71 373.500zM41 412.500L63 386 75 412.500zM35 447L69.500 447 57 474zM27 526.500L61.500 525 49 552zM956 384L925 393 947 417z" />
        </g>
        <g stroke="#f00" strokeWidth="5.500">
          <path d="M473 152Q440 143 418 125M416 217Q360 181 328 132M104 266L64 286M106 341L62 362M108 381L68 400M108 465.500Q85 466 62 460M99 544Q75 544 53 537M889 512Q903 445 937 404" />
        </g>
      </Svg>
      {NOTES.map(([c, t]) => (
        <div key={t} className={'absolute flex items-center justify-center rounded-[26px] border-[6px] border-[#f00] pl-[15px] pr-[17px] text-center text-[28.200px] leading-[36px] text-[#f00] ' + c}>{t}</div>
      ))}
    </div>
  );
}

/* ---------- app ---------- */

export default function App() {
  return (
    <div className={'relative flex h-[768px] w-[1366px] flex-col overflow-hidden bg-[#15150f] ' + HELV}>
      <MenuBar />
      <div className="flex h-[741px] shrink-0 flex-col overflow-hidden rounded-b-[5px] bg-[#ececec]">
        <div className="relative flex h-[22px] shrink-0 items-center justify-center border-b border-[#bbb] bg-gradient-to-b from-[#e8e8e8] to-[#dadada]">
          <div className="absolute left-[8px] flex gap-[8px]">
            <div className="h-[12px] w-[12px] rounded-full border border-[#e0383d] bg-[#fc4a4f]" />
            <div className="h-[12px] w-[12px] rounded-full border border-[#e5a713] bg-[#fdb912]" />
            <div className="h-[12px] w-[12px] rounded-full border border-[#0ebb38] bg-[#06d247]" />
          </div>
          <span className="mt-[2px] font-['Inter',sans-serif] text-[12.800px] text-[#444]">manchester</span>
        </div>
        <div className="flex h-[24px] shrink-0 items-center justify-center border-b border-[#a0a0a0] bg-gradient-to-b from-[#dadada] to-[#cfcfcf]">
          <span className="mt-px font-['Inter',sans-serif] text-[11px] text-[#1a1a1a]">manchester</span>
        </div>
        <div className="flex h-[37px] shrink-0 border-b border-[#8f8f8f] bg-gradient-to-b from-[#ebebeb] to-[#c5c5c5] pl-[5px]">
          <Grip w="w-[5px]" />
          <Tools items={['save']} />
          <Dots />
          <Tools items={['fresh', 'dup', 'manager', 'folder', 'saveAs']} />
          <Dots />
          <Tools items={['print', 'image', 'svg', 'pdf', 'undo', 'redo']} />
          <Grip w="w-[10px]" />
          <Tools items={['full', 'one', 'zin', 'zout', 'refresh']} />
          <Grip w="w-[8px]" />
          <Tools items={['group', 'ungroup', 'lock', 'unlock', 'raise', 'align']} />
          <Grip w="w-[9px]" />
          <Tools items={['atlas', 'first', 'prev', 'next', 'last', 'printOff', 'imageOff', 'atlasSet']} />
        </div>
        <div className="flex h-[642px] shrink-0">
          <div className="flex w-[36px] shrink-0 flex-col border-r-2 border-[#b0b0b0] bg-gradient-to-r from-[#eeeeee] to-[#c6c6c6]">
            <div className="flex h-[8px] items-end justify-center">
              <Svg w={24} h={6}>{Array.from({ length: 8 }, (_, i) => <rect key={i} x={i * 3} y={i % 2 ? 3 : 0} width="2" height="2" fill={i % 2 ? '#f8f8f8' : '#bbb'} />)}</Svg>
            </div>
            {['hand', 'zoom', 'select', 'move'].map((k) => (
              <div key={k} className={'flex h-[38px] items-center justify-center pl-[2px] ' + (k === 'select' ? 'bg-gradient-to-r from-[#aaa] via-[#d6d6d6] to-[#a0a0a0]' : '')}><Svg>{T[k]}</Svg></div>
            ))}
            <div className="flex h-[11px] items-center px-[2px]"><div className="w-full border-t border-dotted border-[#777]" /></div>
            {['addMap', 'addImage', 'addLabel', 'addLegend', 'addScale', 'addShape', 'addArrow', 'addTable', 'addHtml'].map((k) => (
              <div key={k} className="flex h-[38px] items-center justify-center pl-[2px]"><Svg>{T[k]}</Svg></div>
            ))}
          </div>
          <div className="flex min-w-0 flex-1 flex-col">
            <TopRuler />
            <div className="flex min-h-0 flex-1"><SideRuler /><Composition /></div>
          </div>
          <Docks />
        </div>
        <div className="flex h-[16px] shrink-0 overflow-hidden border-t border-[#b0b0b0] pt-[9px] text-[12px] leading-[16px]">
          <span className="ml-[16px] w-[106px]">914.550</span>
          <span className="w-[128px]">170.227</span>
          <span className="w-[70px] text-[#226]">1</span>
          <div className="-mt-[2px] flex h-[20px] w-[94px] overflow-hidden rounded-r-[4px] border border-[#aaa] bg-white"><span className="flex-1 pl-[2px] pt-[2px]">95.8%</span><div className="w-[17px] bg-[#4d9efb]" /></div>
        </div>
      </div>
      <div className="flex h-[4px] shrink-0"><div className="w-[237px]" /><div className="w-[770px] bg-[#6b6b6b]" /></div>
      <Annotations />
    </div>
  );
}
